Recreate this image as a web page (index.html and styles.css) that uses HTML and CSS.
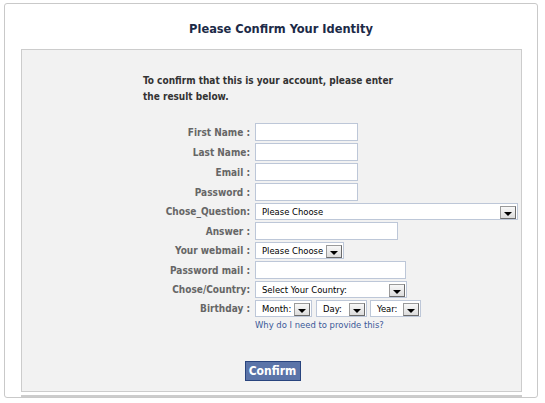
FILE: index.html
```html
<!DOCTYPE html>
<html>
<head>
<meta charset="utf-8">
<link rel="stylesheet" href="styles.css">
</head>
<body>
<div class="box">
  <h1 class="title">Please Confirm Your Identity</h1>
  <div class="panel">
    <p class="intro">To confirm that this is your account, please enter<br>the result below.</p>
    <div class="form">
      <div class="row"><span class="label">First Name :</span><span class="input w-first"></span></div>
      <div class="row"><span class="label">Last Name:</span><span class="input w-first"></span></div>
      <div class="row"><span class="label">Email :</span><span class="input w-first"></span></div>
      <div class="row"><span class="label">Password :</span><span class="input w-first"></span></div>
      <div class="row"><span class="label">Chose_Question:</span><span class="select w-question"><span class="sel-text">Please Choose</span><span class="arrow"><span class="tri"></span></span></span></div>
      <div class="row"><span class="label">Answer :</span><span class="input w-answer"></span></div>
      <div class="row"><span class="label">Your webmail :</span><span class="select w-webmail"><span class="sel-text">Please Choose</span><span class="arrow"><span class="tri"></span></span></span></div>
      <div class="row"><span class="label">Password mail :</span><span class="input w-pmail"></span></div>
      <div class="row"><span class="label">Chose/Country:</span><span class="select w-country"><span class="sel-text">Select Your Country:</span><span class="arrow"><span class="tri"></span></span></span></div>
      <div class="row"><span class="label">Birthday :</span>
        <span class="birth">
          <span class="select w-month"><span class="sel-text">Month:</span><span class="arrow"><span class="tri"></span></span></span>
          <span class="select w-day"><span class="sel-text">Day:</span><span class="arrow"><span class="tri"></span></span></span>
          <span class="select w-year"><span class="sel-text">Year:</span><span class="arrow"><span class="tri"></span></span></span>
        </span>
      </div>
      <div class="row link-row"><span class="label"></span><a class="why" href="#">Why do I need to provide this?</a></div>
    </div>
    <div class="actions"><button class="btn" type="button">Confirm</button></div>
  </div>
  <div class="bar"></div>
</div>
</body>
</html>
```

FILE: styles.css
```css
html, body {
  margin: 0;
  padding: 0;
  background: #ffffff;
}
body {
  font-family: "DejaVu Sans Condensed", "DejaVu Sans", sans-serif;
  font-stretch: condensed;
}
.box {
  margin: 3px 0 0 4px;
  width: 532px;
  height: 393px;
  border: 1px solid #c9c9c9;
  border-radius: 3px;
  background: #ffffff;
}
.title {
  margin: 0;
  padding: 5px 0 0 20px;
  height: 40px;
  line-height: 40px;
  text-align: center;
  font-size: 12.7px;
  font-weight: bold;
  color: #1c2a47;
}
.panel {
  margin-left: 16px;
  width: 499px;
  height: 341px;
  border: 1px solid #cccccc;
  background: #f2f2f2;
  display: flex;
  flex-direction: column;
}
.intro {
  margin: 23px 0 0 121px;
  font-size: 10px;
  font-weight: bold;
  line-height: 16px;
  color: #333333;
}
.form {
  margin-top: 18px;
  display: flex;
  flex-direction: column;
  gap: 2px;
}
.row {
  display: grid;
  grid-template-columns: 228px auto;
  column-gap: 5px;
  align-items: center;
  justify-items: start;
}
.label {
  justify-self: end;
  font-size: 10px;
  font-weight: bold;
  color: #666666;
  white-space: nowrap;
}
.input {
  display: block;
  box-sizing: border-box;
  height: 18px;
  border: 1px solid #bdc7d8;
  background: #ffffff;
}
.select {
  display: flex;
  align-items: center;
  box-sizing: border-box;
  height: 17px;
  border: 1px solid #bdc7d8;
  background: #ffffff;
  padding: 0 1px 0 6px;
}
.sel-text {
  flex: 1;
  font-size: 9.4px;
  color: #000000;
  white-space: nowrap;
  line-height: 13px;
}
.arrow {
  display: flex;
  justify-content: center;
  align-items: flex-end;
  box-sizing: border-box;
  width: 16px;
  height: 13px;
  margin-top: 1px;
  border: 1px solid #6b6b6b;
  border-top-color: #9a9a9a;
  border-left-color: #9a9a9a;
  background: linear-gradient(#f8f8f8, #dcdcdc);
  padding-bottom: 2px;
}
.tri {
  width: 0;
  height: 0;
  border-left: 4px solid transparent;
  border-right: 4px solid transparent;
  border-top: 4px solid #000000;
}
.w-first { width: 103px; }
.w-question { width: 263px; }
.w-answer { width: 143px; }
.w-webmail { width: 89px; }
.w-pmail { width: 151px; }
.w-country { width: 152px; }
.birth {
  display: flex;
  gap: 3px;
}
.w-month { width: 57px; }
.w-day { width: 51px; margin-left: 1px; }
.w-year { width: 51px; }
.link-row {
  margin-top: -1px;
}
.why {
  font-size: 9.4px;
  line-height: 13px;
  color: #3b5998;
  text-decoration: none;
}
.actions {
  margin-top: 30px;
  display: flex;
  justify-content: center;
}
.btn {
  box-sizing: border-box;
  width: 56px;
  height: 20px;
  margin-left: 2px;
  padding: 0;
  border: 1px solid #29447e;
  background: #5b74a8;
  color: #ffffff;
  font-family: "DejaVu Sans Condensed", "DejaVu Sans", sans-serif;
  font-stretch: condensed;
  font-size: 12px;
  font-weight: bold;
  line-height: 18px;
}
.bar {
  margin: 3px 0 0 16px;
  width: 501px;
  height: 2px;
  background: #cccccc;
}
```
